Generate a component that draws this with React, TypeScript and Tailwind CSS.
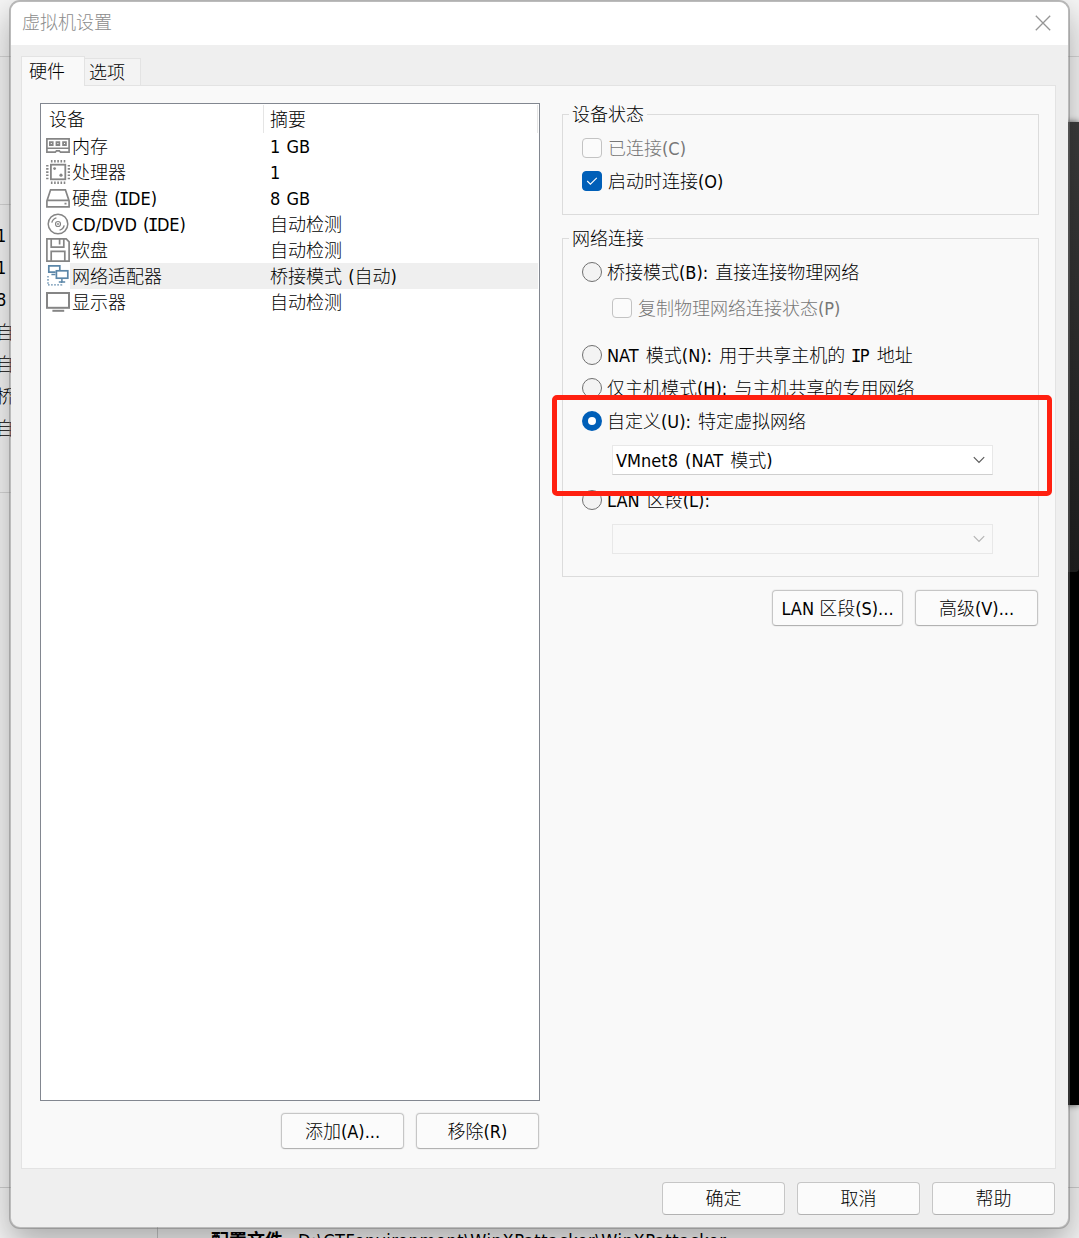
import type { ReactNode } from "react";
import { clsx } from "clsx";

interface Device {
  name: string;
  summary: string;
  icon: ReactNode;
  selected?: boolean;
}

const GREY = "#858585";
const BLUE = "#5b86a8";

function Icon({ children, color = GREY }: { children: ReactNode; color?: string }) {
  return (
    <svg width="24" height="24" viewBox="0 0 24 24" fill="none" stroke={color} strokeWidth="1.7" className="shrink-0">
      {children}
    </svg>
  );
}

const MemoryIcon = () => (
  <Icon>
    <path d="M.9 4.9h22.2v13.3h-8.6l-1.2-1.4h-2.8l-1.2 1.4H.9z" />
    <path d="M1 14.3h22" strokeWidth="1.5" />
    <path d="M3.9 8.2h2.8v2.8H3.9zM10.5 8.2h2.8v2.8h-2.8zM17.1 8.2h2.8v2.8h-2.8z" strokeWidth="1.8" />
  </Icon>
);

const CpuIcon = () => (
  <Icon>
    <rect x="4.9" y="4.7" width="14.4" height="14.6" strokeWidth="1.8" />
    <path d="M4.9 1.2h14.6M4.9 22.8h14.6" strokeWidth="2.4" strokeDasharray="1.6 1.6" />
    <path d="M1.3 4.9v14.6M22.9 4.9v14.6" strokeWidth="2.4" strokeDasharray="1.6 1.6" />
    <circle cx="8.6" cy="8.6" r="1.4" fill={GREY} stroke="none" />
    <circle cx="15" cy="15.2" r="1.6" fill={GREY} stroke="none" />
  </Icon>
);

const DiskIcon = () => (
  <Icon>
    <path d="M.9 15 4.6 3.8h14.8L23.1 15v5.8H.9zM1 14.4h22" />
    <path d="M18.5 17.6h2" />
  </Icon>
);

const DiscIcon = () => (
  <Icon>
    <circle cx="12" cy="12" r="9.8" strokeWidth="1.5" />
    <circle cx="12" cy="12" r="2.5" strokeWidth="1.2" />
    <circle cx="12" cy="12" r=".9" fill={GREY} stroke="none" />
    <path d="M5.8 10.6a6.5 6.5 0 0 1 4.6-4.8M18.2 13.4a6.5 6.5 0 0 1-4.6 4.8" strokeWidth="1.4" />
  </Icon>
);

const FloppyIcon = () => (
  <Icon>
    <path d="M.9.9h19.3l2.9 2.9v19.3H.9z" />
    <path d="M5.2.9v8.3h12.6V.9M13.6 1v5.4" />
    <path d="M5.2 23v-9.6h13.6V23" />
  </Icon>
);

const NetworkIcon = () => (
  <Icon color={BLUE}>
    <path d="M9.6 8.2H2.8V1.8h11v4.4" />
    <rect x="10.4" y="6.8" width="11.4" height="7.4" fill="#fff" />
    <path d="M5.4 10.4h4M15.9 14.6v3M12.8 18h6.4" strokeWidth="1.5" />
    <path d="M2 12v9.2M2 20.8h13.6v-3" strokeWidth="1.3" strokeDasharray="1.6 1.5" />
  </Icon>
);

const DisplayIcon = () => (
  <Icon>
    <rect x="1" y="3" width="22" height="14.8" strokeWidth="2" />
    <path d="M6.4 20.8h11.8" strokeWidth="2" />
  </Icon>
);

const devices: Device[] = [
  { name: "内存", summary: "1 GB", icon: <MemoryIcon /> },
  { name: "处理器", summary: "1", icon: <CpuIcon /> },
  { name: "硬盘 (IDE)", summary: "8 GB", icon: <DiskIcon /> },
  { name: "CD/DVD (IDE)", summary: "自动检测", icon: <DiscIcon /> },
  { name: "软盘", summary: "自动检测", icon: <FloppyIcon /> },
  { name: "网络适配器", summary: "桥接模式 (自动)", icon: <NetworkIcon />, selected: true },
  { name: "显示器", summary: "自动检测", icon: <DisplayIcon /> },
];

// Capital I carries serifs in the dialog font, so it is taken from the mono face
function Label({ text }: { text: string }) {
  const parts = text.split("I");
  return (
    <>
      {parts.map((part, idx) => (
        <span key={idx}>
          {idx > 0 && <span className="-mx-[1.7px] font-['DejaVu_Sans_Mono',monospace]">I</span>}
          {part}
        </span>
      ))}
    </>
  );
}

function Button({ children, className }: { children: ReactNode; className?: string }) {
  return (
    <button
      className={clsx(
        "flex items-center justify-center rounded-[4px] border border-[#c6c6c6] border-b-[#b2b2b2] bg-[#fbfbfb] whitespace-pre ring-1 ring-[#f0f0f0]",
        className
      )}
    >
      {children}
    </button>
  );
}

function Group({ title, children, className }: { title: string; children: ReactNode; className?: string }) {
  return (
    <section className={clsx("flex w-[477px] flex-col items-start border border-[#dcdcdc]", className)}>
      <h2 className="-mt-[13px] ml-[6px] h-[26px] bg-[#f9f9f9] px-[3px] leading-[26px]">{title}</h2>
      {children}
    </section>
  );
}

function Check({ label, checked, disabled, className }: { label: string; checked?: boolean; disabled?: boolean; className?: string }) {
  return (
    <div className={clsx("flex h-5 items-center gap-[6px] whitespace-pre", disabled && "text-[#777]", className)}>
      <span
        className={clsx(
          "flex size-5 items-center justify-center rounded-[4px] border",
          checked ? "border-[#005fb8] bg-[#005fb8]" : "border-[#c3c3c3] bg-[#fbfbfb]"
        )}
      >
        {checked && (
          <svg width="12" height="10" viewBox="0 0 12 10" fill="none" stroke="#fff" strokeWidth="1.1">
            <path d="m1.2 5 3.2 3.2 6.4-6.4" />
          </svg>
        )}
      </span>
      <span className="pt-px">{label}</span>
    </div>
  );
}

function Radio({ label, checked, className }: { label: string; checked?: boolean; className?: string }) {
  return (
    <div className={clsx("ml-[19px] flex h-5 items-center gap-[5px] whitespace-pre", className)}>
      <span
        className={clsx(
          "size-5 rounded-full",
          checked ? "border-[6px] border-[#005fb8] bg-white" : "border border-[#707070] bg-[#f3f3f3]"
        )}
      />
      <span className="pt-[2px] [word-spacing:2px]">
        <Label text={label} />
      </span>
    </div>
  );
}

function Combo({ value, disabled, className }: { value?: string; disabled?: boolean; className?: string }) {
  return (
    <div
      className={clsx(
        "ml-[49px] flex h-[30px] w-[381px] items-center justify-between border border-[#e8e8e8] pr-[7px] pl-[3px] whitespace-pre",
        disabled ? "bg-[#f9f9f9]" : "border-b-[#cfcfcf] bg-white",
        className
      )}
    >
      <span className="pt-[2px] [word-spacing:2px]">{value}</span>
      <svg width="12" height="8" viewBox="0 0 12 8" fill="none" stroke={disabled ? "#b4b4b4" : "#5a5a5a"} strokeWidth="1.2">
        <path d="m.8 1.2 5.2 5.2 5.2-5.2" />
      </svg>
    </div>
  );
}

// The application windows that show past the dialog's edges
function Backdrop() {
  return (
    <div className="absolute inset-0 flex flex-col overflow-hidden bg-[#f6f6f6]">
      <div className="h-[57px] shrink-0 border-b border-[#d8d8d8]" />
      <div className="flex h-[1131px] shrink-0 justify-between border-b border-[#d0d0d0]">
        <div className="w-5 overflow-hidden">
          <div className="mt-[147px] h-[289px] border-y border-[#d8d8d8] pt-[15px]">
            {["1", "1", "8", "自", "自", "桥", "自"].map((text, idx) => (
              <div key={idx} className="-ml-[4px] h-[32.2px] leading-[32px] whitespace-pre">
                {text}
              </div>
            ))}
          </div>
        </div>
        <div className="mt-[65px] h-[983px] w-5 bg-black shadow-[0_0_6px_#555]">
          <div className="h-[450px] rounded-br-sm bg-gradient-to-b from-[#3d3d3d] to-[#202020]" />
        </div>
      </div>
      <div className="ml-[157px] flex h-[50px] shrink-0 gap-[15px] border-l border-[#c8c8c8] pt-[41px] pl-[53px] leading-6 whitespace-pre">
        <b className="font-bold">配置文件</b>
        <span className="tracking-[0.6px]">{"D:\\CTFenvironment\\WinXPattacker\\WinXPattacker"}</span>
      </div>
    </div>
  );
}

export default function App() {
  return (
    <div className="relative h-[1238px] w-[1079px] overflow-hidden font-['DejaVu_Sans_Condensed','DejaVu_Sans','Noto_Sans_CJK_SC',sans-serif] text-[18px] leading-[26px] font-light text-black [word-spacing:1px]">
      <Backdrop />

      <div className="absolute top-0 left-[9px] flex h-[1229px] w-[1061px] flex-col overflow-hidden rounded-[11px] border-2 border-[#70707070] bg-[#efefef] bg-clip-padding shadow-[0_14px_34px_#00000050]">
        <header className="flex h-[43px] shrink-0 items-center justify-between bg-white pr-[17px] pb-[2px] pl-[11px] text-[#8c8c8c]">
          <h1>虚拟机设置</h1>
          <svg width="16" height="16" viewBox="0 0 16 16" stroke="#969696" strokeWidth="1.3">
            <path d="m.8.8 14.4 14.4M15.2.8.8 15.2" />
          </svg>
        </header>

        {/* Tab strip, the active tab runs into the panel below */}
        <nav className="z-10 mt-[11px] -mb-px ml-[10px] flex h-[30px] items-end">
          <div className="h-[30px] w-[64px] border border-b-0 border-[#e3e3e3] bg-[#f9f9f9] pt-[2px] pl-[7px]">硬件</div>
          <div className="h-[28px] w-[56px] border border-l-0 border-[#e3e3e3] bg-[#f3f3f3] pt-px pl-[4px]">选项</div>
        </nav>

        <main className="ml-[10px] flex h-[1084px] w-[1035px] shrink-0 border border-[#e3e3e3] bg-[#f9f9f9] pt-[17px] pl-[18px]">
          <div className="flex w-[500px] flex-col items-end">
            <div className="h-[998px] w-[500px] border border-[#828790] bg-white pr-px">
              <div className="flex h-[29px] pt-px">
                <div className="h-[28px] w-[223px] border-r border-[#e5e5e5] pt-[2px] pl-[8px]">设备</div>
                <div className="h-[28px] flex-1 border-r border-[#e5e5e5] pt-[2px] pl-[6px]">摘要</div>
              </div>
              {devices.map((device) => (
                <div key={device.name} className="flex h-[26px] items-center pl-[5px] whitespace-pre">
                  {device.icon}
                  <div className={clsx("flex h-[26px] flex-1 pt-px", device.selected && "bg-[#efefef]")}>
                    <span className="w-[200px] pl-[2px]">
                      <Label text={device.name} />
                    </span>
                    <span>{device.summary}</span>
                  </div>
                </div>
              ))}
            </div>
            <div className="mt-3 mr-px flex gap-3">
              <Button className="h-[36px] w-[123px] pt-[2px]">添加(A)...</Button>
              <Button className="h-[36px] w-[123px] pt-[2px]">移除(R)</Button>
            </div>
          </div>

          <div className="relative ml-[22px] flex w-[477px] flex-col pt-[11px]">
            <Group title="设备状态" className="h-[101px]">
              <Check label="已连接(C)" disabled className="mt-[10px] ml-[19px]" />
              <Check label="启动时连接(O)" checked className="mt-[13px] ml-[19px]" />
            </Group>

            <Group title="网络连接" className="mt-[23px] h-[339px]">
              <Radio label="桥接模式(B): 直接连接物理网络" className="mt-[10px]" />
              <Check label="复制物理网络连接状态(P)" disabled className="mt-[16px] ml-[49px]" />
              <Radio label="NAT 模式(N): 用于共享主机的 IP 地址" className="mt-[27px]" />
              <Radio label="仅主机模式(H): 与主机共享的专用网络" className="mt-[13px]" />
              <Radio label="自定义(U): 特定虚拟网络" checked className="mt-[13px]" />
              <Combo value="VMnet8 (NAT 模式)" className="mt-[14px]" />
              <Radio label="LAN 区段(L):" className="mt-[15px]" />
              <Combo disabled className="mt-[14px]" />
            </Group>

            <div className="mt-[13px] mr-px flex justify-end gap-3">
              <Button className="h-[36px] w-[131px] pt-[2px]">LAN 区段(S)...</Button>
              <Button className="h-[36px] w-[123px] pt-[2px]">高级(V)...</Button>
            </div>

            {/* Red annotation frame */}
            <div className="pointer-events-none absolute top-[292px] -left-[10px] h-[101px] w-[500px] rounded-[5px] border-[5px] border-[#ff2010]" />
          </div>
        </main>

        <footer className="mt-[13px] mr-[13px] flex justify-end gap-3">
          <Button className="h-[33px] w-[123px]">确定</Button>
          <Button className="h-[33px] w-[123px]">取消</Button>
          <Button className="h-[33px] w-[123px]">帮助</Button>
        </footer>
      </div>
    </div>
  );
}
